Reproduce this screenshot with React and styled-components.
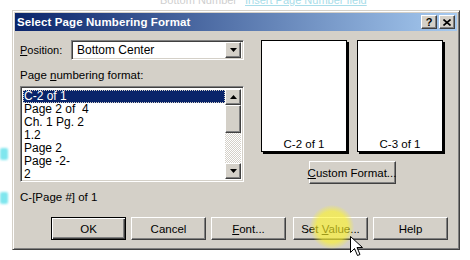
import React from "react";
import styled, { createGlobalStyle } from "styled-components";

const GlobalStyle = createGlobalStyle`
  html, body {
    margin: 0;
    padding: 0;
    background: #ffffff;
  }
  body {
    font-family: "Liberation Sans", Arial, sans-serif;
    font-size: 11px;
    color: #000;
  }
`;

const raised = `
  border-style: solid;
  border-width: 1px;
  border-color: #ffffff #404040 #404040 #ffffff;
  box-shadow: inset -1px -1px 0 #808080, inset 1px 1px 0 #d4d0c8;
`;

const sunken = `
  border-style: solid;
  border-width: 1px;
  border-color: #808080 #ffffff #ffffff #808080;
  box-shadow: inset 1px 1px 0 #404040, inset -1px -1px 0 #d4d0c8;
`;

const Page = styled.div`
  width: 470px;
  height: 260px;
  position: relative;
  overflow: hidden;
  background: #ffffff;
  display: flex;
  flex-direction: column;
`;

const TopStrip = styled.div`
  height: 10px;
  overflow: hidden;
  display: flex;
  gap: 8px;
  padding-left: 160px;
`;

const FaintText = styled.span`
  margin-top: -6px;
  font-size: 11px;
  color: ${(p) => (p.link ? "#a8dde9" : "#cfcfcf")};
  text-decoration: ${(p) => (p.link ? "underline" : "none")};
  white-space: nowrap;
`;

const Row = styled.div`
  display: flex;
`;

const LeftGutter = styled.div`
  width: 12px;
  display: flex;
  flex-direction: column;
  align-items: flex-start;
`;

const Blob = styled.div`
  width: 8px;
  height: 12px;
  margin-top: ${(p) => p.mt}px;
  background: #7fe6ee;
  border-radius: 2px;
  filter: blur(1px);
`;

const Dialog = styled.div`
  width: 448px;
  height: 240px;
  box-sizing: border-box;
  background: #d4d0c8;
  border-style: solid;
  border-width: 1px;
  border-color: #d4d0c8 #404040 #404040 #d4d0c8;
  box-shadow: inset 1px 1px 0 #ffffff, inset -1px -1px 0 #808080;
  padding: 2px;
  display: flex;
  flex-direction: column;
`;

const TitleBar = styled.div`
  height: 18px;
  background: linear-gradient(to right, #0a246a, #a6caf0);
  display: flex;
  align-items: center;
  padding: 0 2px 0 2px;
`;

const Title = styled.div`
  flex: 1;
  color: #ffffff;
  font-weight: bold;
  font-size: 11.5px;
  letter-spacing: 0.1px;
`;

const TitleButton = styled.div`
  width: 16px;
  height: 14px;
  box-sizing: border-box;
  background: #d4d0c8;
  ${raised}
  margin-left: ${(p) => (p.gap ? 2 : 0)}px;
  display: flex;
  align-items: center;
  justify-content: center;
  font-weight: bold;
  font-size: 11px;
  line-height: 1;
`;

const Body = styled.div`
  flex: 1;
  display: flex;
  flex-direction: column;
  padding: 0 5px 0 5px;
`;

const Upper = styled.div`
  display: flex;
  gap: 16px;
`;

const LeftCol = styled.div`
  width: 224px;
  display: flex;
  flex-direction: column;
`;

const FieldRow = styled.div`
  display: flex;
  align-items: center;
  margin-top: 9px;
  height: 20px;
`;

const Label = styled.div`
  width: 51px;
  white-space: nowrap;
`;

const U = styled.span`
  text-decoration: underline;
`;

const Select = styled.div`
  flex: 1;
  height: 20px;
  box-sizing: border-box;
  background: #ffffff;
  ${sunken}
  display: flex;
  align-items: center;
  padding: 2px;
`;

const SelectText = styled.div`
  flex: 1;
  padding-left: 3px;
  font-size: 12px;
`;

const ArrowBtn = styled.div`
  width: 16px;
  height: 16px;
  box-sizing: border-box;
  background: #d4d0c8;
  ${raised}
  display: flex;
  align-items: center;
  justify-content: center;
`;

const SectionLabel = styled.div`
  margin-top: 8px;
  height: 14px;
  line-height: 14px;
  font-size: 11.5px;
`;

const ListBox = styled.div`
  margin-top: 4px;
  height: 96px;
  box-sizing: border-box;
  background: #ffffff;
  ${sunken}
  padding: 2px;
  display: flex;
`;

const Items = styled.div`
  flex: 1;
  overflow: hidden;
  padding-top: 1px;
`;

const Item = styled.div`
  height: 13px;
  line-height: 12px;
  font-size: 12px;
  padding-left: 1px;
  white-space: pre;
  background: ${(p) => (p.selected ? "#0a246a" : "transparent")};
  color: ${(p) => (p.selected ? "#ffffff" : "#000000")};
  outline: ${(p) => (p.selected ? "1px dotted #d4d0c8" : "none")};
  outline-offset: -1px;
`;

const ScrollBar = styled.div`
  width: 16px;
  display: flex;
  flex-direction: column;
`;

const Track = styled.div`
  flex: 1;
  display: flex;
  flex-direction: column;
  background: repeating-conic-gradient(#d4d0c8 0 25%, #ffffff 0 50%) 0 0 / 2px 2px;
`;

const Thumb = styled.div`
  height: 28px;
  box-sizing: border-box;
  background: #d4d0c8;
  ${raised}
`;

const Summary = styled.div`
  margin-top: 8px;
  height: 14px;
  line-height: 14px;
  font-size: 11.5px;
`;

const RightCol = styled.div`
  display: flex;
  flex-direction: column;
  align-items: center;
  width: 184px;
  padding-top: 9px;
`;

const Previews = styled.div`
  display: flex;
  gap: 10px;
`;

const PreviewPage = styled.div`
  width: 86px;
  height: 112px;
  box-sizing: border-box;
  background: #ffffff;
  border: 1px solid #000000;
  box-shadow: 2px 2px 0 #000000;
  display: flex;
  align-items: flex-end;
  justify-content: center;
  padding-bottom: 1px;
  font-size: 11.5px;
`;

const Button = styled.div`
  width: ${(p) => p.w || 75}px;
  height: 23px;
  box-sizing: border-box;
  background: #d4d0c8;
  ${raised}
  ${(p) =>
    p.def
      ? `
    border-color: #000;
    box-shadow: inset 1px 1px 0 #ffffff, inset -1px -1px 0 #404040, inset -2px -2px 0 #808080;
  `
      : ""}
  display: flex;
  align-items: center;
  justify-content: center;
  white-space: nowrap;
  font-size: 11.5px;
  margin-top: ${(p) => p.mt || 0}px;
  margin-left: ${(p) => p.ml || 0}px;
`;

const ButtonRow = styled.div`
  display: flex;
  justify-content: flex-end;
  padding-right: 4px;
  margin-top: 13px;
`;

const Highlight = styled.div`
  position: absolute;
  left: 310px;
  top: 205px;
  width: 44px;
  height: 44px;
  border-radius: 50%;
  background: radial-gradient(circle, rgba(255, 245, 40, 0.62) 50%, rgba(255, 245, 40, 0) 72%);
  pointer-events: none;
`;

const Cursor = styled.svg`
  position: absolute;
  left: 350px;
  top: 236px;
`;

const Down = () => (
  <svg width="7" height="4" viewBox="0 0 7 4">
    <path d="M0 0h7L3.5 4z" fill="#000" />
  </svg>
);

const Up = () => (
  <svg width="7" height="4" viewBox="0 0 7 4">
    <path d="M0 4h7L3.5 0z" fill="#000" />
  </svg>
);

const items = [
  "C-2 of 1",
  "Page 2 of  4",
  "Ch. 1 Pg. 2",
  "1.2",
  "Page 2",
  "Page -2-",
  "2",
  "- 2 -",
];

export default function App() {
  return (
    <>
      <GlobalStyle />
      <Page>
        <TopStrip>
          <FaintText>Bottom Number</FaintText>
          <FaintText link>Insert Page Number field</FaintText>
        </TopStrip>
        <Row>
          <LeftGutter>
            <Blob mt={138} />
            <Blob mt={32} />
          </LeftGutter>
          <Dialog>
            <TitleBar>
              <Title>Select Page Numbering Format</Title>
              <TitleButton>?</TitleButton>
              <TitleButton gap>
                <svg width="8" height="7" viewBox="0 0 8 7">
                  <path d="M0.5 0.5l7 6M7.5 0.5l-7 6" stroke="#000" strokeWidth="1.6" />
                </svg>
              </TitleButton>
            </TitleBar>
            <Body>
              <Upper>
                <LeftCol>
                  <FieldRow>
                    <Label>
                      <U>P</U>osition:
                    </Label>
                    <Select>
                      <SelectText>Bottom Center</SelectText>
                      <ArrowBtn>
                        <Down />
                      </ArrowBtn>
                    </Select>
                  </FieldRow>
                  <SectionLabel>
                    Page <U>n</U>umbering format:
                  </SectionLabel>
                  <ListBox>
                    <Items>
                      {items.map((t, i) => (
                        <Item key={i} selected={i === 0}>
                          {t}
                        </Item>
                      ))}
                    </Items>
                    <ScrollBar>
                      <ArrowBtn>
                        <Up />
                      </ArrowBtn>
                      <Track>
                        <Thumb />
                      </Track>
                      <ArrowBtn>
                        <Down />
                      </ArrowBtn>
                    </ScrollBar>
                  </ListBox>
                  <Summary>C-[Page #] of 1</Summary>
                </LeftCol>
                <RightCol>
                  <Previews>
                    <PreviewPage>C-2 of 1</PreviewPage>
                    <PreviewPage>C-3 of 1</PreviewPage>
                  </Previews>
                  <Button w={87} mt={9}>
                    <span>
                      <U>C</U>ustom Format...
                    </span>
                  </Button>
                </RightCol>
              </Upper>
              <ButtonRow>
                <Button def>OK</Button>
                <Button ml={5}>Cancel</Button>
                <Button ml={5}>
                  <span>
                    <U>F</U>ont...
                  </span>
                </Button>
                <Button ml={7}>
                  <span>
                    Set <U>V</U>alue...
                  </span>
                </Button>
                <Button ml={5}>Help</Button>
              </ButtonRow>
            </Body>
          </Dialog>
        </Row>
        <Highlight />
        <Cursor width="13" height="21" viewBox="0 0 13 21">
          <path
            d="M0.5 0.5v16l4-4 3 7 2.5-1-3-7h5.5z"
            fill="#ffffff"
            stroke="#000000"
            strokeWidth="1"
            strokeLinejoin="miter"
          />
        </Cursor>
      </Page>
    </>
  );
}
